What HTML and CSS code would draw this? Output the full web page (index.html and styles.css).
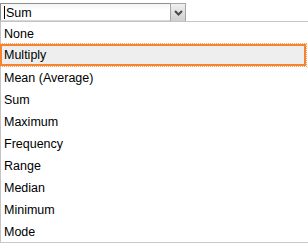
FILE: index.html
```html
<!DOCTYPE html>
<html lang="en">
<head>
    <meta charset="UTF-8">
    <meta name="viewport" content="width=device-width, initial-scale=1.0">
    <title>Aggregate Select</title>
    <link rel="stylesheet" href="styles.css">
</head>
<body>
    <div class="combo">
        <div class="combo-value"><span class="caret"></span>Sum</div>
        <div class="combo-button">
            <svg width="9" height="6" viewBox="0 0 9 6">
                <path d="M1 1 L4.5 4.5 L8 1" fill="none" stroke="#4a4a4a" stroke-width="2"/>
            </svg>
        </div>
    </div>

    <ul class="option-list">
        <li class="option">None</li>
        <li class="option selected">Multiply</li>
        <li class="option">Mean (Average)</li>
        <li class="option">Sum</li>
        <li class="option">Maximum</li>
        <li class="option">Frequency</li>
        <li class="option">Range</li>
        <li class="option">Median</li>
        <li class="option">Minimum</li>
        <li class="option">Mode</li>
    </ul>
</body>
</html>
```

FILE: styles.css
```css
body {
    margin: 0;
    background: #ffffff;
    font-family: "Liberation Sans", Arial, sans-serif;
    font-size: 12.5px;
    color: #000000;
    overflow: hidden;
}
.combo {
    display: flex;
    width: 186px;
    height: 18px;
    margin-top: 3px;
    box-sizing: border-box;
}
.combo-value {
    flex: 1;
    display: flex;
    align-items: center;
    border: 1px solid #8f8f8f;
    border-right: none;
    border-bottom-color: #d8d8d8;
    background: linear-gradient(#f4f4f4, #ffffff 40%);
    padding-left: 3px;
    padding-top: 1px;
    line-height: 16px;
}
.caret {
    display: inline-block;
    width: 1px;
    height: 13px;
    background: #000000;
    margin-right: 1px;
}
.combo-button {
    width: 16px;
    display: flex;
    align-items: center;
    justify-content: center;
    padding-top: 1px;
    border: 1px solid #a6a6a6;
    border-bottom: none;
    background: linear-gradient(#f0f0f0, #cfcfcf);
    box-sizing: border-box;
}
.option-list {
    list-style: none;
    margin: 0;
    padding: 0;
    width: 320px;
    border-top: 1px solid #c4c4c4;
    border-left: 1px solid #c4c4c4;
    border-bottom: 1px solid #c8c8c8;
    box-shadow: 0 2px 2px rgba(0, 0, 0, 0.15);
    background: #ffffff;
}
.option {
    height: 22px;
    line-height: 20px;
    padding-top: 2px;
    padding-left: 3px;
    box-sizing: border-box;
}
.option.selected {
    width: 306px;
    margin-left: -1px;
    padding-left: 2px;
    padding-top: 1px;
    line-height: 17px;
    background: #eeeeee;
    border: 2px solid #f5832f;
    outline: 1px dotted #f7a062;
}
```
